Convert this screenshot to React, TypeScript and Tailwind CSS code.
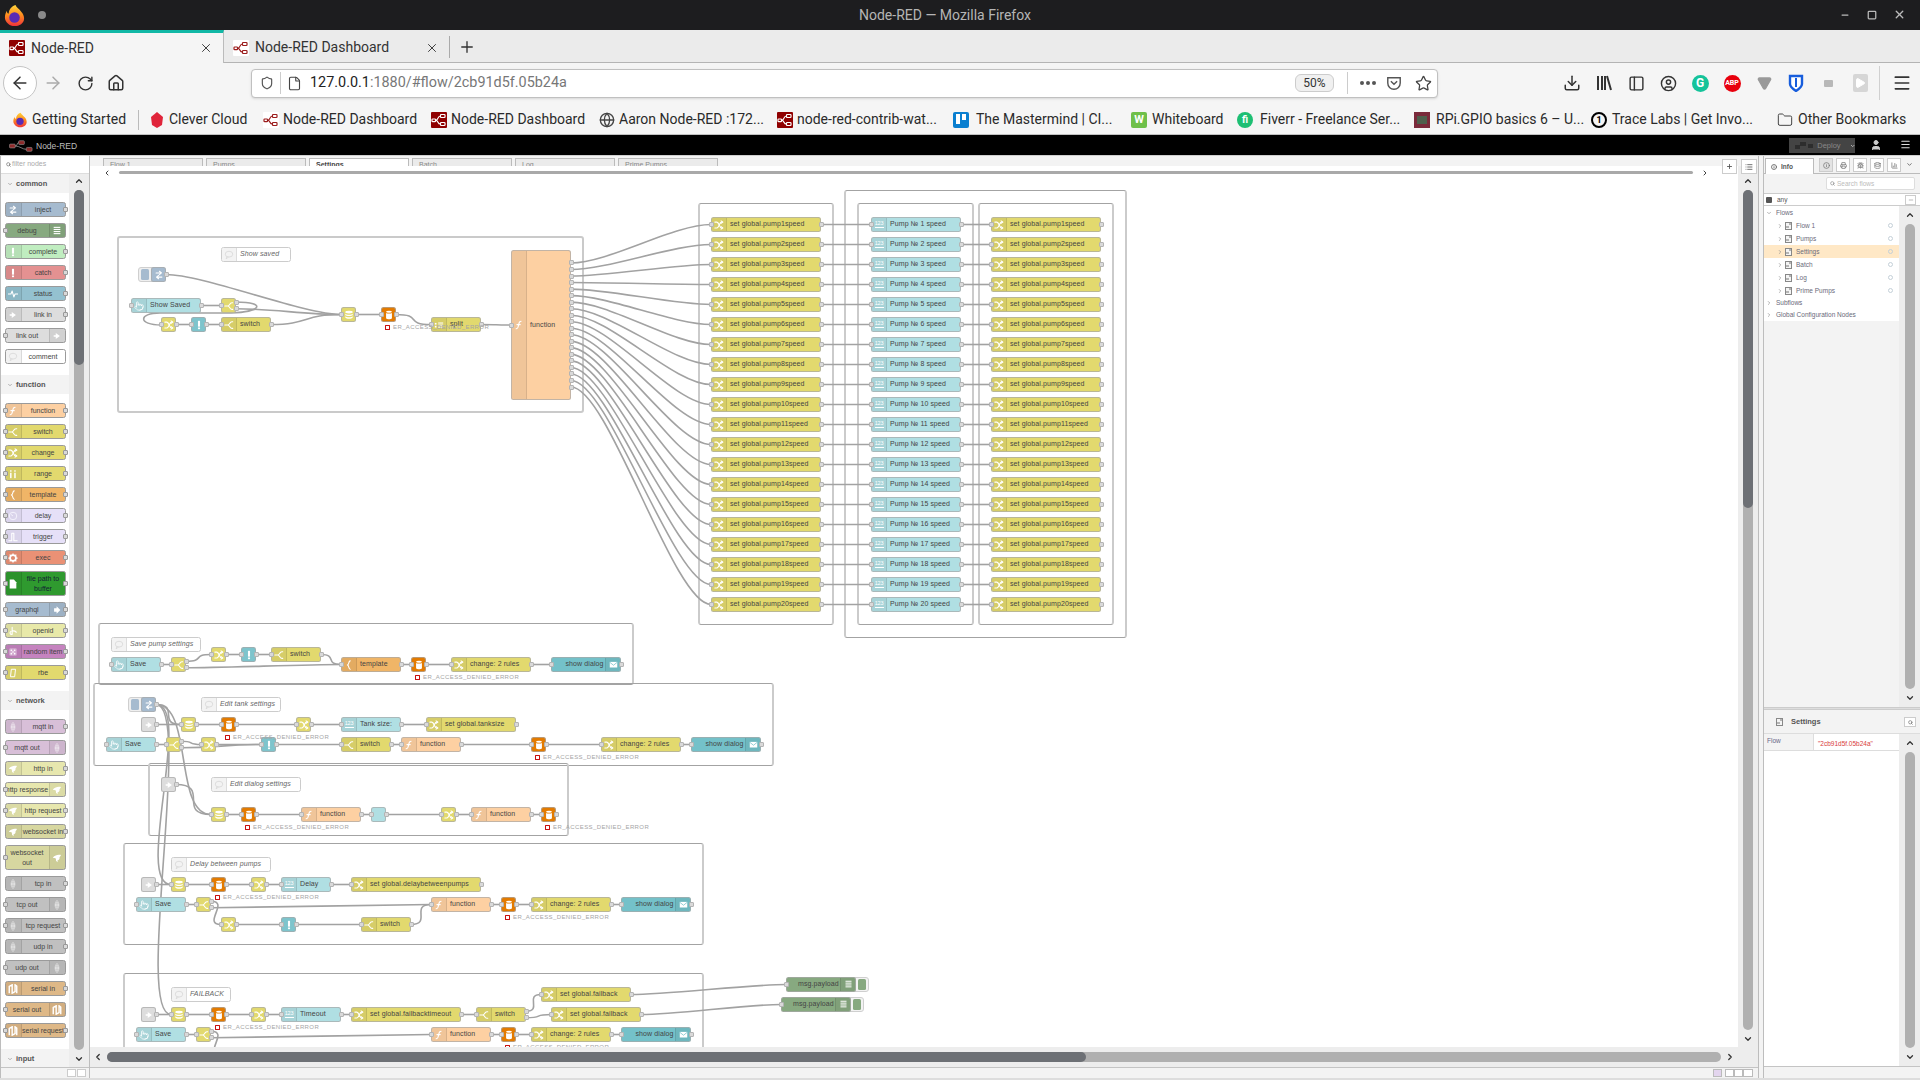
import React from "react";
import { ArrowLeft, ArrowRight, RotateCw, Home, Shield, File, Star, Download, PanelLeft, CircleUser, Menu, Folder, Globe, X, Plus, Minus, Square, ChevronUp, ChevronDown, ChevronLeft, ChevronRight, Pointer, Search, List, User, Info, Printer, Bug, Database, BarChart3, Play, Triangle } from "lucide-react";

type IconName = "change" | "switch" | "inject" | "fn" | "db" | "cyl" | "bang" | "touch" | "num" | "mail" | "moon" | "bubble" | "split" | "link" | "linkout" | "list" | "wave" | "tmpl" | "range" | "clock" | "trigger" | "gear" | "file" | "arrow" | "openid" | "dice" | "rbe" | "lens" | "bird" | "serial" | "none";

function Ico({ name, size = 10 }: { name: IconName; size?: number }) {
  const s = { width: size, height: size };
  const p = { fill: "none", stroke: "#fff", strokeWidth: 2.6, strokeLinecap: "round" as const, strokeLinejoin: "round" as const };
  const f = { fill: "#fff" };
  if (name === "num") {
    return (
      <span className="flex flex-col items-center leading-none text-white text-[5.5px] tracking-[-0.2px]">
        123
        <span className="w-[9px] h-px bg-white mt-px" />
      </span>
    );
  }
  if (name === "touch") return <Pointer style={s} color="#fff" strokeWidth={1.8} />;
  return (
    <svg viewBox="0 0 24 24" style={s}>
      {name === "change" && (
        <g {...p}>
          <path d="M2 5h5c5 0 6 14 11 14h3M2 19h5c5 0 6-14 11-14h3" />
          <path d="M17 2l4 3-4 3M17 16l4 3-4 3" />
        </g>
      )}
      {name === "switch" && (
        <g {...p}>
          <path d="M2 12h7c5 0 4-8 10-8h2M9 12c5 0 4 8 10 8h2" />
        </g>
      )}
      {name === "inject" && (
        <g {...p}>
          <path d="M5 7h12M13 3l5 4-5 4M19 17H7M11 13l-5 4 5 4" />
        </g>
      )}
      {name === "fn" && <path {...p} d="M17 3c-5 0-5 4-6 9s-1 9-6 9M7 11h8" />}
      {name === "db" && (
        <g {...f}>
          <ellipse cx="12" cy="5" rx="9" ry="3.5" />
          <path d="M3 9c3 3 15 3 18 0v3c-3 3-15 3-18 0zM3 15c3 3 15 3 18 0v3c-3 4-15 4-18 0z" />
        </g>
      )}
      {name === "cyl" && (
        <g {...f}>
          <ellipse cx="12" cy="4" rx="7" ry="2.5" />
          <path d="M5 7c2 2 12 2 14 0v13c-2 3-12 3-14 0z" />
        </g>
      )}
      {name === "bang" && (
        <g {...f}>
          <rect x="9.5" y="2" width="5" height="14" />
          <rect x="9.5" y="18" width="5" height="4" />
        </g>
      )}
      {name === "mail" && (
        <g>
          <rect x="2" y="5" width="20" height="15" fill="#fff" />
          <path d="M2 6l10 8 10-8" fill="none" stroke="#74c1c9" strokeWidth="2" />
        </g>
      )}
      {name === "moon" && <path {...f} d="M15 3a9 9 0 1 0 0 18 7.5 7.5 0 0 1 0-18z" />}
      {name === "bubble" && (
        <g fill="none" stroke="#d8d8d8" strokeWidth="2">
          <ellipse cx="12" cy="10" rx="9" ry="7" />
          <path d="M7 16l-2 5 6-4" />
        </g>
      )}
      {name === "split" && (
        <g {...f}>
          <rect x="2" y="7" width="4" height="4" />
          <rect x="2" y="14" width="4" height="4" />
          <rect x="10" y="6" width="12" height="2.5" />
          <rect x="10" y="11" width="12" height="2.5" />
          <rect x="10" y="16" width="12" height="2.5" />
        </g>
      )}
      {name === "link" && <path {...f} d="M4 10h5V5l10 7-10 7v-5H4z" />}
      {name === "linkout" && <path {...f} d="M4 10h5V5l10 7-10 7v-5H4z" />}
      {name === "list" && (
        <g {...f}>
          <rect x="4" y="2" width="16" height="2.6" />
          <rect x="4" y="7" width="16" height="2.6" />
          <rect x="4" y="12" width="16" height="2.6" />
          <rect x="4" y="17" width="16" height="2.6" />
        </g>
      )}
      {name === "wave" && <path {...p} d="M1 12h6l3-7 4 14 3-7h6" />}
      {name === "tmpl" && <path {...p} d="M15 2c-5 0-2 9-7 10 5 1 2 10 7 10" />}
      {name === "range" && (
        <g {...f}>
          <rect x="5" y="9" width="3.5" height="13" />
          <rect x="5" y="3" width="3.5" height="3.5" />
          <rect x="15" y="9" width="3.5" height="13" />
          <rect x="15" y="3" width="3.5" height="3.5" />
        </g>
      )}
      {name === "clock" && (
        <g fill="none" stroke="#f4f2fc" strokeWidth="2.4">
          <circle cx="12" cy="12" r="9" />
          <path d="M12 12l-5-4" />
        </g>
      )}
      {name === "trigger" && <path {...p} d="M2 21h7V3h5v18h8" />}
      {name === "gear" && (
        <g fill="none" stroke="#fff" strokeWidth="4">
          <circle cx="12" cy="12" r="7" />
          <path d="M12 1v4M12 19v4M1 12h4M19 12h4M4 4l3 3M17 17l3 3M20 4l-3 3M7 17l-3 3" strokeWidth="3" />
        </g>
      )}
      {name === "file" && <path {...f} d="M4 1h10l6 7v15H4z" />}
      {name === "arrow" && <path {...f} d="M5 8h6V3l9 9-9 9v-5H5z" />}
      {name === "openid" && (
        <g {...p}>
          <path d="M10 3v17M10 12c6-1 8 1 10 3M10 20c-5 1-7-4-3-7" />
        </g>
      )}
      {name === "dice" && (
        <g fill="#fff">
          <rect x="3" y="3" width="18" height="18" rx="3" fillOpacity=".35" />
          <circle cx="8" cy="8" r="2" />
          <circle cx="16" cy="8" r="2" />
          <circle cx="12" cy="12" r="2" />
          <circle cx="8" cy="16" r="2" />
          <circle cx="16" cy="16" r="2" />
        </g>
      )}
      {name === "rbe" && <path fill="none" stroke="#fff" strokeWidth="2.4" d="M8 3h10l-2 18H6z" />}
      {name === "lens" && (
        <g fill="none" stroke="#fff" strokeOpacity=".75" strokeWidth="1.6">
          <path d="M12 1c-6 6-6 16 0 22 6-6 6-16 0-22z" />
          <path d="M12 5c-3 4-3 10 0 14 3-4 3-10 0-14z" />
          <path d="M7 12h10" />
        </g>
      )}
      {name === "bird" && <path {...f} d="M2 11c6-7 14-8 20-6-2 2-2 4-4 5 1 3-1 7-5 8l1 4-4-3c-1-3 0-5-1-6-2 0-4 0-7-2z" />}
      {name === "serial" && <path fill="none" stroke="#fff" strokeWidth="3.4" d="M3 22V6l7-4v20l7-4V2l4 3v17" />}
    </svg>
  );
}

const C = {
  yel: "#e2d96e", ui: "#b0dfe3", fn: "#fdd0a2", inj: "#a6bbcf", toast: "#7ec4cc", dlg: "#74c1c9", tpl: "#f0b567",
  or: "#e37b00", link: "#dddddd", dbg: "#87a980", white: "#ffffff",
};

type N = {
  id: string; x: number; y: number; w: number; h: number; c: string; icon: IconName; label: string;
  side?: "r"; outs: number; inp: boolean; status?: boolean; btn?: "inject" | "debug"; comment?: boolean; tx?: number;
};

const nodes: N[] = [];
const byId: Record<string, N> = {};
function n(id: string, x: number, y: number, w: number, c: string, icon: IconName, label = "", o: Partial<N> = {}) {
  const node: N = { id, x, y, w, h: 15, c, icon, label, outs: 1, inp: true, ...o };
  nodes.push(node);
  byId[id] = node;
}
function cm(x: number, y: number, w: number, label: string) {
  n("c" + x + y, x, y, w, C.white, "bubble", label, { comment: true, outs: 0, inp: false });
}

const wires: [string, string, number?][] = [];
function chain(...ids: string[]) {
  for (let i = 0; i < ids.length - 1; i++) wires.push([ids[i], ids[i + 1]]);
}

// Show saved
cm(221, 246, 70, "Show saved");
n("a_i", 151, 266, 15, C.inj, "inject", "", { btn: "inject", inp: false });
n("a_b", 131, 297, 70, C.ui, "touch", "Show Saved");
n("a_s", 221, 297, 15, C.yel, "switch", "", { outs: 2 });
n("a_c", 161, 316, 15, C.yel, "change");
n("a_t", 191, 316, 15, C.toast, "bang");
n("a_w", 221, 316, 50, C.yel, "switch", "switch");
n("a_d", 341, 306, 15, C.yel, "db");
n("a_o", 381, 306, 15, C.or, "cyl", "", { status: true });
n("a_p", 431, 316, 50, C.yel, "split", "split");
n("a_f", 511, 249, 60, C.fn, "fn", "function", { h: 150, outs: 20 });
chain("a_b", "a_s");
chain("a_c", "a_t", "a_w", "a_d", "a_o", "a_p", "a_f");
chain("a_i", "a_d");
wires.push(["a_s", "a_d", 1]);

for (let i = 0; i < 20; i++) {
  const y = 216 + 20 * i;
  const k = i + 1;
  n("A" + k, 711, y, 110, C.yel, "change", `set global.pump${k}speed`);
  n("P" + k, 871, y, 90, C.ui, "num", `Pump № ${k} speed`);
  n("D" + k, 991, y, 110, C.yel, "change", `set global.pump${k}speed`);
  chain("A" + k, "P" + k, "D" + k);
  wires.push(["a_f", "A" + k, i]);
}

// Save pump settings
cm(111, 636, 90, "Save pump settings");
n("b_b", 111, 656, 50, C.ui, "touch", "Save");
n("b_s", 171, 656, 15, C.yel, "switch", "", { outs: 2 });
n("b_c", 211, 646, 15, C.yel, "change");
n("b_t", 241, 646, 15, C.toast, "bang");
n("b_w", 271, 646, 50, C.yel, "switch", "switch");
n("b_m", 341, 656, 60, C.tpl, "tmpl", "template");
n("b_o", 411, 656, 15, C.or, "cyl", "", { status: true });
n("b_h", 451, 656, 80, C.yel, "change", "change: 2 rules");
n("b_g", 551, 656, 70, C.dlg, "mail", "show dialog", { side: "r", tx: 13.5 });
chain("b_b", "b_s");
wires.push(["b_s", "b_c", 0], ["b_s", "b_m", 1]);
chain("b_c", "b_t", "b_w", "b_m", "b_o", "b_h", "b_g");

// Edit tank settings
n("c_i", 141, 696, 15, C.inj, "inject", "", { btn: "inject", inp: false });
cm(201, 696, 80, "Edit tank settings");
n("c_l", 141, 716, 15, C.link, "link", "", { inp: false });
n("c_d", 181, 716, 15, C.yel, "db");
n("c_o", 221, 716, 15, C.or, "cyl", "", { status: true });
n("c_c", 296, 716, 15, C.yel, "change");
n("c_n", 341, 716, 60, C.ui, "num", "Tank size:");
n("c_g", 426, 716, 90, C.yel, "change", "set global.tanksize");
n("c_b", 106, 736, 50, C.ui, "touch", "Save");
n("c_s", 166, 736, 15, C.yel, "switch", "", { outs: 2 });
n("c_h", 201, 736, 15, C.yel, "change");
n("c_t", 261, 736, 15, C.toast, "bang");
n("c_w", 341, 736, 50, C.yel, "switch", "switch");
n("c_f", 401, 736, 60, C.fn, "fn", "function");
n("c_r", 531, 736, 15, C.or, "cyl", "", { status: true });
n("c_j", 601, 736, 80, C.yel, "change", "change: 2 rules");
n("c_y", 691, 736, 70, C.dlg, "mail", "show dialog", { side: "r", tx: 13.5 });
chain("c_l", "c_d", "c_o", "c_c", "c_n", "c_g");
chain("c_b", "c_s");
wires.push(["c_s", "c_h", 0], ["c_s", "c_t", 1]);
chain("c_h", "c_t", "c_w", "c_f", "c_r", "c_j", "c_y");
chain("c_i", "c_d");

// Edit dialog settings
n("d_l", 161, 776, 15, C.link, "link", "", { inp: false });
cm(211, 776, 90, "Edit dialog settings");
n("d_d", 211, 806, 15, C.yel, "db");
n("d_o", 241, 806, 15, C.or, "cyl", "", { status: true });
n("d_f", 301, 806, 60, C.fn, "fn", "function");
n("d_m", 371, 806, 15, C.ui, "moon");
n("d_c", 441, 806, 15, C.yel, "change");
n("d_g", 471, 806, 60, C.fn, "fn", "function");
n("d_r", 541, 806, 15, C.or, "cyl", "", { status: true });
chain("d_l", "d_d", "d_o", "d_f", "d_m", "d_c", "d_g", "d_r");
chain("c_i", "d_d");

// Delay
cm(171, 856, 100, "Delay between pumps");
n("e_l", 141, 876, 15, C.link, "link", "", { inp: false });
n("e_d", 171, 876, 15, C.yel, "db");
n("e_o", 211, 876, 15, C.or, "cyl", "", { status: true });
n("e_c", 251, 876, 15, C.yel, "change");
n("e_n", 281, 876, 50, C.ui, "num", "Delay");
n("e_g", 351, 876, 130, C.yel, "change", "set global.delaybetweenpumps");
n("e_b", 136, 896, 50, C.ui, "touch", "Save");
n("e_s", 196, 896, 15, C.yel, "switch", "", { outs: 2 });
n("e_f", 431, 896, 60, C.fn, "fn", "function");
n("e_r", 501, 896, 15, C.or, "cyl", "", { status: true });
n("e_h", 531, 896, 80, C.yel, "change", "change: 2 rules");
n("e_y", 621, 896, 70, C.dlg, "mail", "show dialog", { side: "r", tx: 13.5 });
n("e_x", 221, 916, 15, C.yel, "change");
n("e_t", 281, 916, 15, C.toast, "bang");
n("e_w", 361, 916, 50, C.yel, "switch", "switch");
chain("e_l", "e_d", "e_o", "e_c", "e_n", "e_g");
chain("e_b", "e_s");
wires.push(["e_s", "e_x", 0], ["e_s", "e_f", 1]);
chain("e_x", "e_t", "e_w", "e_f", "e_r", "e_h", "e_y");
chain("c_i", "e_d");

// Failback
cm(171, 986, 60, "FAILBACK");
n("f_l", 141, 1006, 15, C.link, "link", "", { inp: false });
n("f_d", 171, 1006, 15, C.yel, "db");
n("f_o", 211, 1006, 15, C.or, "cyl", "", { status: true });
n("f_c", 251, 1006, 15, C.yel, "change");
n("f_n", 281, 1006, 60, C.ui, "num", "Timeout");
n("f_g", 351, 1006, 110, C.yel, "change", "set global.failbacktimeout");
n("f_w", 476, 1006, 50, C.yel, "switch", "switch", { outs: 2 });
n("f_1", 541, 986, 90, C.yel, "change", "set global.failback");
n("f_2", 551, 1006, 90, C.yel, "change", "set global.failback");
n("f_3", 786, 976, 70, C.dbg, "list", "msg.payload", { side: "r", tx: 11, outs: 0, btn: "debug" });
n("f_4", 781, 996, 70, C.dbg, "list", "msg.payload", { side: "r", tx: 11, outs: 0, btn: "debug" });
n("f_b", 136, 1026, 50, C.ui, "touch", "Save");
n("f_s", 196, 1026, 15, C.yel, "switch", "", { outs: 2 });
n("f_f", 431, 1026, 60, C.fn, "fn", "function");
n("f_r", 501, 1026, 15, C.or, "cyl", "", { status: true });
n("f_h", 531, 1026, 80, C.yel, "change", "change: 2 rules");
n("f_y", 621, 1026, 70, C.dlg, "mail", "show dialog", { side: "r", tx: 13.5 });
n("f_x", 221, 1046, 15, C.yel, "change");
n("f_t", 281, 1046, 15, C.toast, "bang");
n("f_z", 361, 1046, 50, C.yel, "switch", "switch");
chain("f_l", "f_d", "f_o", "f_c", "f_n", "f_g", "f_w");
wires.push(["f_w", "f_1", 0], ["f_w", "f_2", 1]);
chain("f_1", "f_3");
chain("f_2", "f_4");
chain("f_b", "f_s");
wires.push(["f_s", "f_x", 0], ["f_s", "f_f", 1]);
chain("f_f", "f_r", "f_h", "f_y");
chain("c_i", "f_d");

const OX = 90;
const OY = 165;
const CANVAS_Y = 166;

function outY(a: N, i: number) {
  return a.y + a.h / 2 + (i - (a.outs - 1) / 2) * 6.53;
}
function wirePath(x1: number, y1: number, x2: number, y2: number) {
  const dx = x2 - x1;
  const dy = y2 - y1;
  const delta = Math.hypot(dx, dy);
  const nw = 50;
  if (dx > 0) {
    let s = 0.75;
    if (delta < nw) s = 0.75 - 0.75 * ((nw - delta) / nw);
    const k = s * nw;
    return `M${x1} ${y1}C${x1 + k} ${y1} ${x2 - k} ${y2} ${x2} ${y2}`;
  }
  const k = 18;
  const my = (y1 + y2) / 2;
  return `M${x1} ${y1}C${x1 + k} ${y1} ${x1 + k} ${my} ${x1} ${my}L${x2} ${my}C${x2 - k} ${my} ${x2 - k} ${y2} ${x2} ${y2}`;
}

const groups = [
  [117, 236, 467, 177, "l"], [698, 203, 136, 422, "d"], [844, 190, 283, 448, "d"], [857, 203, 117, 422, "d"], [978, 203, 136, 422, "d"],
  [98, 623, 536, 62, "d"], [93, 683, 681, 83, "d"], [148, 763, 421, 73, "d"], [123, 843, 581, 102, "d"], [123, 973, 581, 200, "d"],
] as const;

function Group({ g }: { g: (typeof groups)[number] }) {
  return (
    <div
      className={g[4] === "l"
        ? "absolute rounded-[3px] border-2 border-[#cacaca]"
        : "absolute rounded-[3px] border-x-2 border-y border-x-[#cbcbcb] border-y-[#a3a3a3]"}
      style={{ left: g[0] - OX, top: g[1] - CANVAS_Y, width: g[2], height: g[3] }}
    />
  );
}

function Port({ left, top }: { left: number; top: number }) {
  return <div className="absolute w-[5px] h-[5px] rounded-[1px] bg-[#d9d9d9] border border-[#b4b4b4]" style={{ left, top }} />;
}

function FlowNode({ d }: { d: N }) {
  const small = d.w === 15;
  return (
    <>
      {d.btn === "inject" && (
        <div className="absolute w-[18px] h-[15px] rounded-[3px] border border-[#cfcfcf] bg-[#efefef] flex items-center pl-[2px]" style={{ left: d.x - OX - 13, top: d.y - OY }}>
          <div className="w-[8px] h-[11px] rounded-[1.5px] bg-[#a6bbcf]" />
        </div>
      )}
      {d.btn === "debug" && (
        <div className="absolute w-[18px] h-[15px] rounded-[3px] border border-[#cfcfcf] bg-[#f3f3f3] flex items-center justify-end pr-[2px]" style={{ left: d.x - OX + d.w - 5, top: d.y - OY }}>
          <div className="w-[8px] h-[11px] rounded-[1.5px] bg-[#87a980]" />
        </div>
      )}
      <div
        className={d.comment
          ? "absolute rounded-[2.5px] border border-[#cccccc] flex items-center italic text-[#666] text-[7px] tracking-[0.1px] whitespace-nowrap"
          : "absolute rounded-[2.5px] border border-[#a8a8a8]/70 flex items-center text-[#444] text-[7px] tracking-[0.1px] whitespace-nowrap"}
        style={{ left: d.x - OX, top: d.y - OY, width: d.w, height: d.h, backgroundColor: d.c, paddingLeft: small ? 0 : d.tx ?? 18 }}
      >
        {d.icon !== "none" && (
          d.side === "r" ? (
            <div className="absolute right-0 top-0 bottom-0 w-[15px] bg-black/5 border-l border-black/10 rounded-r-[2px] flex items-center justify-center">
              <Ico name={d.icon} size={9} />
            </div>
          ) : (
            <div
              className={small
                ? "absolute left-0 top-0 bottom-0 w-full flex items-center justify-center"
                : d.comment
                  ? "absolute left-0 top-0 bottom-0 w-[15px] bg-[#f3f3f3] border-r border-[#dddddd] rounded-l-[2px] flex items-center justify-center"
                  : "absolute left-0 top-0 bottom-0 w-[15px] bg-black/5 border-r border-black/10 rounded-l-[2px] flex items-center justify-center"}
            >
              <Ico name={d.icon} size={10} />
            </div>
          )
        )}
        {d.label}
      </div>
      {d.inp && <Port left={d.x - OX - 2.5} top={d.y - OY + d.h / 2 - 2.5} />}
      {Array.from({ length: d.outs }, (_, i) => (
        <Port key={i} left={d.x - OX + d.w - 2.5} top={outY(d, i) - OY - 2.5} />
      ))}
    </>
  );
}

function NodeStatus({ d }: { d: N }) {
  return (
    <div className="absolute flex items-center gap-[3px] text-[6px] tracking-[0.4px] leading-none text-[#a5a5a5] whitespace-nowrap" style={{ left: d.x - OX + 4, top: d.y - OY + 17 }}>
      <span className="w-[5px] h-[5px] rounded-[0.5px] border-[1.5px] border-[#c81010] bg-white" />
      ER_ACCESS_DENIED_ERROR
    </div>
  );
}

function Canvas() {
  return (
    <div className="relative flex-1 overflow-hidden bg-white">
      {groups.map((g, i) => <Group key={i} g={g} />)}
      <svg className="absolute left-0 top-0 w-full h-full" fill="none" stroke="#a2a2a2" strokeWidth="1.6">
        <g transform={`translate(${-OX} ${-OY})`}>
          {wires.map(([a, b, i], k) => {
            const A = byId[a];
            const B = byId[b];
            return <path key={k} d={wirePath(A.x + A.w, outY(A, i ?? 0), B.x, B.y + B.h / 2)} />;
          })}
          <path d="M236 301C268 301 262 312 225 312L160 312C138 312 138 324 161 324" />
        </g>
      </svg>
      {nodes.map((d) => <FlowNode key={d.id} d={d} />)}
      {nodes.filter((d) => d.status).map((d) => <NodeStatus key={d.id} d={d} />)}
      <div className="absolute left-[13px] top-0 right-[-2px] h-[13px] bg-white flex items-center gap-[8px]">
        <ChevronLeft size={8} color="#444" strokeWidth={3} />
        <div className="w-[1574px] h-[3px] rounded-full bg-[#a9a9a9]" />
        <ChevronRight size={8} color="#444" strokeWidth={3} />
      </div>
    </div>
  );
}

type PN = { l: string; c: string; i: IconName; r?: boolean; inp?: boolean; out?: boolean; h?: number; t?: string };
const pal: { title: string; items: PN[] }[] = [
  { title: "common", items: [
    { l: "inject", c: "#a6bbcf", i: "inject", out: true },
    { l: "debug", c: "#87a980", i: "list", r: true, inp: true },
    { l: "complete", c: "#c0edc0", i: "bang", out: true },
    { l: "catch", c: "#e49191", i: "bang", out: true },
    { l: "status", c: "#94c1d0", i: "wave", out: true },
    { l: "link in", c: "#dddddd", i: "link", out: true },
    { l: "link out", c: "#dddddd", i: "link", r: true, inp: true },
    { l: "comment", c: "#ffffff", i: "bubble" },
  ] },
  { title: "function", items: [
    { l: "function", c: "#fdd0a2", i: "fn", inp: true, out: true },
    { l: "switch", c: "#e2d96e", i: "switch", inp: true, out: true },
    { l: "change", c: "#e2d96e", i: "change", inp: true, out: true },
    { l: "range", c: "#e2d96e", i: "range", inp: true, out: true },
    { l: "template", c: "#f0b567", i: "tmpl", inp: true, out: true },
    { l: "delay", c: "#e6e0f8", i: "clock", inp: true, out: true },
    { l: "trigger", c: "#e6e0f8", i: "trigger", inp: true, out: true },
    { l: "exec", c: "#ea9175", i: "gear", inp: true, out: true },
    { l: "file path to buffer", c: "#2f9a2f", i: "file", inp: true, out: true, h: 25, t: "#123" },
    { l: "graphql", c: "#a6bbcf", i: "arrow", r: true, inp: true, out: true },
    { l: "openid", c: "#e8e9a9", i: "openid", inp: true, out: true },
    { l: "random item", c: "#c583bf", i: "dice", inp: true, out: true },
    { l: "rbe", c: "#e2d96e", i: "rbe", inp: true, out: true },
  ] },
  { title: "network", items: [
    { l: "mqtt in", c: "#d8bfd8", i: "lens", out: true },
    { l: "mqtt out", c: "#d8bfd8", i: "lens", r: true, inp: true },
    { l: "http in", c: "#e7e7ae", i: "bird", out: true },
    { l: "http response", c: "#e7e7ae", i: "bird", r: true, inp: true },
    { l: "http request", c: "#e7e7ae", i: "bird", inp: true, out: true },
    { l: "websocket in", c: "#d7d7a0", i: "bird", out: true },
    { l: "websocket out", c: "#d7d7a0", i: "bird", r: true, inp: true, h: 25 },
    { l: "tcp in", c: "#c0c0c0", i: "lens", out: true },
    { l: "tcp out", c: "#c0c0c0", i: "lens", r: true, inp: true },
    { l: "tcp request", c: "#c0c0c0", i: "lens", inp: true, out: true },
    { l: "udp in", c: "#c0c0c0", i: "lens", out: true },
    { l: "udp out", c: "#c0c0c0", i: "lens", r: true, inp: true },
    { l: "serial in", c: "#deb887", i: "serial", out: true },
    { l: "serial out", c: "#deb887", i: "serial", r: true, inp: true },
    { l: "serial request", c: "#deb887", i: "serial", inp: true, out: true },
  ] },
];

function PalNode({ p }: { p: PN }) {
  return (
    <div
      className="relative w-[61px] ml-[3.5px] rounded-[2.5px] border border-[#9a9a9a] flex items-center text-center text-[7px] leading-[10px]"
      style={{ backgroundColor: p.c, height: p.h ?? 15, color: p.t ?? "#444", paddingLeft: p.r ? 0 : 16, paddingRight: p.r ? 16 : 0 }}
    >
      <div className={p.r
        ? "absolute right-0 top-0 bottom-0 w-[16px] bg-black/5 border-l border-black/10 flex items-center justify-center"
        : "absolute left-0 top-0 bottom-0 w-[16px] bg-black/5 border-r border-black/10 flex items-center justify-center"}>
        <Ico name={p.i} size={10} />
      </div>
      <span className="w-full whitespace-normal">{p.l}</span>
      {p.inp && <div className="absolute left-[-3px] top-1/2 -mt-[2.5px] w-[5px] h-[5px] rounded-[1px] bg-[#d9d9d9] border border-[#999]" />}
      {p.out && <div className="absolute right-[-3px] top-1/2 -mt-[2.5px] w-[5px] h-[5px] rounded-[1px] bg-[#d9d9d9] border border-[#999]" />}
    </div>
  );
}

function CatHead({ t }: { t: string }) {
  return (
    <div className="h-[19px] bg-[#f3f3f3] flex items-center pl-[6px] gap-[3px] text-[7.5px] font-bold text-[#555]">
      <ChevronDown size={6} color="#888" strokeWidth={2.5} />
      {t}
    </div>
  );
}

function ScrollCol({ dark, top, bottom, w }: { dark?: number; top: number; bottom: number; w: string }) {
  return (
    <div className={w === "20" ? "relative w-[20px] bg-[#ededed] shrink-0" : "relative w-[21px] bg-[#ededed] shrink-0"}>
      <ChevronUp className="absolute left-1/2 -ml-[5px]" style={{ top: top - 14 }} size={10} color="#333" strokeWidth={3} />
      <div className="absolute left-1/2 -ml-[5px] w-[10px] rounded-full bg-[#b0b0b0]" style={{ top, bottom }} />
      {dark ? <div className="absolute left-1/2 -ml-[5px] w-[10px] rounded-full bg-[#6d7075]" style={{ top, height: dark }} /> : null}
      <ChevronDown className="absolute left-1/2 -ml-[5px]" style={{ bottom: bottom - 14 }} size={10} color="#333" strokeWidth={3} />
    </div>
  );
}

function Palette() {
  return (
    <div className="w-[90px] shrink-0 flex flex-col border-l border-r border-[#bdbdbd] bg-white">
      <div className="h-[18px] shrink-0 flex items-center pl-[5px] gap-[1px] text-[7px] text-[#aaa] border-b border-[#ddd]">
        <Search size={5} color="#666" strokeWidth={3} />
        filter nodes
      </div>
      <div className="flex-1 flex min-h-0">
        <div className="flex-1 overflow-hidden">
          {pal.map((c) => (
            <div key={c.title}>
              <CatHead t={c.title} />
              <div className="flex flex-col gap-[6px] pt-[9px] pb-[11px]">
                {c.items.map((p) => <PalNode key={p.l} p={p} />)}
              </div>
            </div>
          ))}
          <CatHead t="input" />
        </div>
        <ScrollCol w="20" top={16} bottom={17} dark={175} />
      </div>
      <div className="h-[11px] shrink-0 bg-[#f3f3f3] border-t border-[#c4c4c4] flex items-center justify-end gap-[1px] pr-[3px]">
        <span className="w-[9px] h-[8px] bg-white border border-[#ccc]" />
        <span className="w-[9px] h-[8px] bg-white border border-[#ccc]" />
      </div>
    </div>
  );
}

const wsTabs = ["Flow 1", "Pumps", "Settings", "Batch", "Log", "Prime Pumps"];

function Workspace() {
  return (
    <div className="flex-1 min-w-0 flex flex-col">
      <div className="relative h-[10px] shrink-0 bg-[#f3f3f3] flex gap-[3px] pl-[13px] pt-[2px] overflow-hidden">
        {wsTabs.map((t) => (
          <div key={t} className={t === "Settings"
            ? "w-[100px] h-[20px] bg-white border border-[#bbb] pl-[6px] text-[7px] leading-[12px] font-bold text-[#444]"
            : "w-[100px] h-[20px] bg-[#ebebeb] border border-[#bbb] pl-[6px] text-[7px] leading-[12px] text-[#888]"}>{t}</div>
        ))}
      </div>
      <div className="flex-1 flex min-h-0">
        <Canvas />
        <ScrollCol w="20" top={24} bottom={17} dark={318} />
      </div>
      <div className="relative h-[20px] shrink-0 bg-[#ededed] flex items-center">
        <ChevronLeft className="absolute left-[3px]" size={10} color="#333" strokeWidth={3} />
        <div className="absolute left-[17px] w-[1614px] h-[10px] rounded-full bg-[#b0b0b0]" />
        <div className="absolute left-[17px] w-[979px] h-[10px] rounded-full bg-[#6d7075]" />
        <ChevronRight className="absolute left-[1635px]" size={10} color="#333" strokeWidth={3} />
      </div>
      <div className="h-[11px] shrink-0 bg-[#f3f3f3] border-t border-[#c4c4c4] flex items-center justify-end gap-[3px] pr-[5px]">
        <span className="w-[9px] h-[8px] bg-[#e3d5ee] border border-[#bbb]" />
        <span className="flex">
          <span className="w-[9px] h-[8px] bg-white border border-[#bbb]" />
          <span className="w-[9px] h-[8px] bg-white border border-[#bbb]" />
          <span className="w-[10px] h-[8px] bg-white border border-[#bbb]" />
        </span>
      </div>
    </div>
  );
}

function TreeIcon() {
  return (
    <svg viewBox="0 0 7 8" className="w-[7px] h-[8px]">
      <rect x=".5" y=".5" width="6" height="7" fill="#f4f4f4" stroke="#888" />
      <path d="M4 2h2M1 5h3" stroke="#777" />
    </svg>
  );
}

function Sidebar() {
  const flows = ["Flow 1", "Pumps", "Settings", "Batch", "Log", "Prime Pumps"];
  const tabIcons = [Info, Printer, Bug, Database, BarChart3];
  return (
    <div className="w-[157px] shrink-0 flex flex-col border-l border-[#bdbdbd] bg-[#f3f3f3] text-[6.5px] text-[#555]">
      <div className="h-[18px] shrink-0 flex items-start pl-[1px] pt-[2px] border-b border-[#bbb] bg-[#f3f3f3]">
        <div className="w-[49px] h-[16px] bg-white border border-[#bbb] border-b-0 flex items-center pl-[5px] gap-[4px] font-bold text-[#555]">
          <Info size={6} color="#555" strokeWidth={3} />
          Info
        </div>
        <div className="flex gap-[3px] ml-[5px]">
          {tabIcons.map((I, i) => (
            <div key={i} className={i === 0 ? "w-[14px] h-[14px] bg-[#e3e3e3] border border-[#ccc] flex items-center justify-center" : "w-[14px] h-[14px] bg-white border border-[#ccc] flex items-center justify-center"}>
              <I size={7} color="#777" strokeWidth={2.5} />
            </div>
          ))}
        </div>
        <ChevronDown className="ml-[5px] mt-[3px]" size={7} color="#666" strokeWidth={3} />
      </div>
      <div className="h-[19px] shrink-0 flex items-center justify-end pr-[5px] border-b-0">
        <div className="w-[89px] h-[13px] bg-white border border-[#ddd] rounded-[2px] flex items-center pl-[3px] gap-[2px] text-[#bbb] text-[6.5px]">
          <Search size={5} color="#888" strokeWidth={3} />
          Search flows
        </div>
      </div>
      <div className="h-[13px] shrink-0 bg-white border-y border-[#ccc] flex items-center pl-[2px] gap-[5px] relative">
        <span className="w-[6px] h-[6px] bg-[#555] rounded-[1px]" />
        any
        <span className="absolute right-[4px] top-px w-[11px] h-[10px] border border-[#ccc] flex items-center justify-center">
          <Minus size={6} color="#777" />
        </span>
      </div>
      <div className="h-[501px] shrink-0 flex">
        <div className="flex-1 min-w-0">
          <div className="bg-white text-[#6a6a7a]">
            <div className="h-[13px] flex items-center pl-[2px] gap-[4px]">
              <ChevronDown size={6} color="#888" strokeWidth={2.5} />
              <span>Flows</span>
            </div>
            {flows.map((f) => (
              <div key={f} className={f === "Settings" ? "h-[13px] flex items-center pl-[13px] bg-[#ffe8c6]" : "h-[13px] flex items-center pl-[13px]"}>
                <ChevronRight size={6} color="#888" strokeWidth={2.5} />
                <span className="ml-[2px]"><TreeIcon /></span>
                <span className="ml-[4px] flex-1">{f}</span>
                <span className="w-[5px] h-[5px] rounded-full border border-[#c4d0d8] mr-[6px]" />
              </div>
            ))}
            <div className="h-[12px] flex items-center pl-[2px]"><ChevronRight size={6} color="#888" strokeWidth={2.5} /><span className="ml-[4px]">Subflows</span></div>
            <div className="h-[12px] flex items-center pl-[2px]"><ChevronRight size={6} color="#888" strokeWidth={2.5} /><span className="ml-[4px]">Global Configuration Nodes</span></div>
          </div>
        </div>
        <ScrollCol w="21" top={18} bottom={18} />
      </div>
      <div className="h-[3px] shrink-0 bg-[#ddd] border-y border-[#ccc]" />
      <div className="h-[24px] shrink-0 flex items-center pl-[12px] border-b border-[#ddd] relative">
        <TreeIcon />
        <span className="ml-[8px] text-[7.5px] font-bold">Settings</span>
        <span className="absolute right-[4px] top-[7px] w-[12px] h-[10px] bg-white border border-[#ccc] flex items-center justify-center">
          <Search size={5} color="#666" strokeWidth={3} />
        </span>
      </div>
      <div className="flex-1 flex min-h-0">
        <div className="flex-1 min-w-0 bg-white">
          <div className="h-[17px] flex border-b border-[#ddd]">
            <div className="w-[50px] bg-[#f3f3f3] border-r border-[#ddd] pl-[3px] leading-[13px] text-[#668]">Flow</div>
            <div className="flex-1 pl-[4px] pt-[4px] leading-[12px] text-[#d83b3b]">"2cb91d5f.05b24a"</div>
          </div>
        </div>
        <ScrollCol w="21" top={18} bottom={18} />
      </div>
      <div className="h-[12px] shrink-0 border-t border-[#c4c4c4]" />
    </div>
  );
}

function NRFav({ light }: { light?: boolean }) {
  const fg = light ? "#9b1c1c" : "#fff";
  return (
    <svg viewBox="0 0 16 16" className="w-[16px] h-[16px] shrink-0">
      <rect width="16" height="16" rx="1" fill={light ? "#fff" : "#8f0000"} />
      <g fill="none" stroke={fg} strokeWidth="1.2">
        <rect x="9.5" y="2.5" width="4.5" height="3" rx=".7" />
        <rect x="1" y="7" width="3.5" height="2.6" rx=".7" />
        <rect x="9.5" y="10.5" width="4.5" height="3" rx=".7" />
        <path d="M4.5 8.3C8 8.3 6 4 9.5 4M4.5 8.3C8 8.3 6 12 9.5 12" />
      </g>
    </svg>
  );
}

function FirefoxLogo({ size }: { size: number }) {
  return (
    <svg viewBox="0 0 24 24" style={{ width: size, height: size }} className="shrink-0">
      <defs>
        <linearGradient id="ffg" x1="0" y1="0" x2="0" y2="1">
          <stop offset="0" stopColor="#ffd43b" />
          <stop offset=".5" stopColor="#ff8a1e" />
          <stop offset="1" stopColor="#f0323c" />
        </linearGradient>
      </defs>
      <path d="M13 1c1 3 4 4 6 7 2 2 3 5 3 7 0 5-5 8-10 8S2 19 2 14c0-3 1-5 2-7 0 2 1 3 2 3 0-4 3-8 7-9z" fill="url(#ffg)" />
      <circle cx="12" cy="14" r="5.5" fill="#5a2bb5" />
    </svg>
  );
}

const marks: { x: number; g: number; t: string; w: React.ReactNode }[] = [
  { x: 149, g: 4, t: "Clever Cloud", w: <svg viewBox="0 0 16 16" className="w-[16px] h-[16px]"><path d="M8 0l6 5-1 8-5 3-5-3-1-8z" fill="#e0243a" /></svg> },
  { x: 263, g: 4, t: "Node-RED Dashboard", w: <NRFav light /> },
  { x: 431, g: 4, t: "Node-RED Dashboard", w: <NRFav /> },
  { x: 599, g: 4, t: "Aaron Node-RED :172...", w: <Globe size={16} color="#444" /> },
  { x: 777, g: 4, t: "node-red-contrib-wat...", w: <NRFav /> },
  { x: 953, g: 7, t: "The Mastermind | CI...", w: <span className="w-[16px] h-[16px] bg-[#0a7fd0] rounded-[2px] flex gap-[2px] items-start justify-center pt-[2px]"><span className="w-[4px] h-[10px] bg-white" /><span className="w-[4px] h-[6px] bg-white" /></span> },
  { x: 1131, g: 5, t: "Whiteboard", w: <span className="w-[16px] h-[16px] bg-[#6fc04a] rounded-[2px] text-white text-[11px] leading-[16px] text-center font-bold">W</span> },
  { x: 1237, g: 7, t: "Fiverr - Freelance Ser...", w: <span className="w-[16px] h-[16px] bg-[#1dbf73] rounded-full text-white text-[10px] leading-[15px] text-center font-bold">fi</span> },
  { x: 1414, g: 6, t: "RPi.GPIO basics 6 – U...", w: <span className="w-[16px] h-[16px] bg-[#7a2a3a] flex items-center justify-center"><span className="w-[10px] h-[8px] bg-[#4e5f4c]" /></span> },
  { x: 1591, g: 5, t: "Trace Labs | Get Invo...", w: <span className="w-[16px] h-[16px] rounded-full border-2 border-black text-[9px] leading-[12px] text-center font-bold text-black">1</span> },
  { x: 1777, g: 5, t: "Other Bookmarks", w: <Folder size={16} color="#444" strokeWidth={1.5} /> },
];

function Bookmarks() {
  return (
    <div className="relative h-[30px] shrink-0 bg-[#f5f5f5] border-b border-[#c0c0c0] text-[14px] text-[#2a2a2a] flex items-center">
      <div className="absolute left-[12px] flex items-center gap-[4px]"><FirefoxLogo size={16} />Getting Started</div>
      <div className="absolute left-[138px] w-px h-[20px] bg-[#bbb]" />
      {marks.map((m) => (
        <div key={m.x} className="absolute flex items-center whitespace-nowrap" style={{ left: m.x, gap: m.g }}>
          {m.w}
          {m.t}
        </div>
      ))}
    </div>
  );
}

export default function App() {
  const tools = [
    <Download size={18} color="#333" />,
    <svg viewBox="0 0 18 18" className="w-[18px] h-[18px]"><path d="M3 2v14M7 2v14M10 2v14M12 2l4 14" stroke="#333" strokeWidth="2" fill="none" /></svg>,
    <PanelLeft size={17} color="#333" />,
    <CircleUser size={17} color="#333" />,
    <span className="w-[17px] h-[17px] rounded-full bg-[#15c39a] text-white text-[12px] leading-[17px] text-center font-bold">G</span>,
    <span className="w-[17px] h-[17px] rounded-full bg-[#e8000d] text-white text-[7px] leading-[17px] text-center font-bold">ABP</span>,
    <Triangle size={15} color="#999" fill="#999" className="rotate-180" />,
    <svg viewBox="0 0 18 18" className="w-[18px] h-[18px]"><path d="M3 2h12v8c0 3-3 5-6 7-3-2-6-4-6-7z" fill="#fff" stroke="#175ddc" strokeWidth="2.4" /><path d="M9 4v9" stroke="#175ddc" strokeWidth="2" /></svg>,
    <span className="w-[9px] h-[7px] rounded-[1px] bg-[#b8b8b8]" />,
    <span className="w-[15px] h-[18px] rounded-[2px] bg-[#d6d6d6] flex items-center justify-center"><Play size={12} color="#fff" fill="#fff" /></span>,
  ];
  return (
    <div className="w-[1920px] h-[1080px] flex flex-col overflow-hidden bg-[#eeeeee] font-['Liberation_Sans',sans-serif]">
      {/* title bar */}
      <div className="relative h-[30px] shrink-0 bg-[#1d1d1f] flex items-center justify-center text-[14px] text-[#b5b5b5] font-['Roboto',sans-serif]">
        <div className="absolute left-[3px] top-[4px]"><FirefoxLogo size={23} /></div>
        <div className="absolute left-[38px] top-[11px] w-[8px] h-[8px] rounded-full bg-[#8a8a8a]" />
        <span className="mr-[30px]">Node-RED — Mozilla Firefox</span>
        <Minus className="absolute left-[1840px] top-[10px]" size={10} color="#bbb" strokeWidth={3} />
        <Square className="absolute left-[1867px] top-[10px]" size={10} color="#bbb" strokeWidth={3} />
        <X className="absolute left-[1893px] top-[8px]" size={13} color="#bbb" strokeWidth={2.5} />
      </div>
      {/* tabs */}
      <div className="h-[33px] shrink-0 bg-[#ebebeb] border-b border-[#b4b4b4] flex font-['Roboto',sans-serif] text-[14px] text-[#333]">
        <div className="w-[224px] h-[33px] bg-[#f5f5f5] border-t-[3px] border-[#12b8a6] border-r border-r-[#bbb] flex items-center pl-[9px] gap-[6px]">
          <NRFav />
          <span className="flex-1">Node-RED</span>
          <X className="mr-[10px]" size={14} color="#333" strokeWidth={1.6} />
        </div>
        <div className="w-[225px] flex items-center pl-[9px] pt-[3px] gap-[6px]">
          <NRFav light />
          <span className="flex-1">Node-RED Dashboard</span>
          <X className="mr-[10px]" size={14} color="#333" strokeWidth={1.6} />
        </div>
        <div className="w-px h-[22px] mt-[6px] bg-[#aaa]" />
        <Plus className="ml-[8px] mt-[8px]" size={18} color="#333" strokeWidth={1.8} />
      </div>
      {/* nav */}
      <div className="h-[42px] shrink-0 bg-[#f5f5f5] flex items-center pb-[2px] font-['Roboto',sans-serif]">
        <div className="ml-[3px] w-[34px] h-[34px] rounded-full border border-[#c4c4c4] bg-white flex items-center justify-center shrink-0"><ArrowLeft size={20} color="#333" strokeWidth={1.8} /></div>
        <div className="w-[32px] flex justify-center shrink-0"><ArrowRight size={20} color="#aaa" strokeWidth={1.8} /></div>
        <div className="w-[32px] flex justify-center shrink-0"><RotateCw size={17} color="#333" strokeWidth={2} /></div>
        <div className="w-[30px] flex justify-center shrink-0"><Home size={18} color="#333" strokeWidth={2} /></div>
        <div className="ml-[120px] w-[1187px] h-[29px] shrink-0 bg-white border border-[#c0c0c0] rounded-[4px] flex items-center shadow-sm">
          <Shield className="ml-[8px]" size={14} color="#555" strokeWidth={2} />
          <div className="ml-[6px] w-px h-[22px] bg-[#ccc]" />
          <File className="ml-[6px]" size={15} color="#444" strokeWidth={1.8} />
          <div className="ml-[8px] flex-1 text-[14.4px]">
            <span className="text-[#222]">127.0.0.1</span>
            <span className="text-[#777]">:1880/#flow/2cb91d5f.05b24a</span>
          </div>
          <div className="w-[39px] h-[18px] rounded-[6px] bg-[#f0f0f0] border border-[#ccc] text-[12px] text-[#333] flex items-center justify-center">50%</div>
          <div className="ml-[13px] w-px h-[22px] bg-[#ccc]" />
          <div className="ml-[12px] flex gap-[2px]">
            <span className="w-[4px] h-[4px] rounded-full bg-[#555]" />
            <span className="w-[4px] h-[4px] rounded-full bg-[#555]" />
            <span className="w-[4px] h-[4px] rounded-full bg-[#555]" />
          </div>
          <svg viewBox="0 0 18 18" className="ml-[10px] w-[16px] h-[16px]"><path d="M2 3h14v6c0 4-3 7-7 7s-7-3-7-7z" fill="none" stroke="#555" strokeWidth="1.6" /><path d="M5.5 7l3.5 3.5L12.5 7" fill="none" stroke="#555" strokeWidth="1.6" /></svg>
          <Star className="ml-[13px] mr-[5px]" size={17} color="#444" strokeWidth={1.8} />
        </div>
        <div className="ml-[118px] flex">
          {tools.map((t, i) => <div key={i} className="w-[32px] h-[24px] flex items-center justify-center">{t}</div>)}
        </div>
        <div className="ml-[3px] w-px h-[34px] bg-[#d0d0d0]" />
        <Menu className="ml-[12px]" size={20} color="#333" strokeWidth={2} />
      </div>
      <div className="font-['Roboto',sans-serif]"><Bookmarks /></div>
      {/* NR header */}
      <div className="relative h-[20px] shrink-0 bg-black flex items-center pt-[2px] text-[#bdbdbd]">
        <svg viewBox="0 0 26 12" className="ml-[9px] w-[25px] h-[12px]">
          <g fill="#8e2a2a" stroke="#999" strokeWidth=".6">
            <rect x="0.5" y="4" width="6" height="4" rx="1" />
            <rect x="10" y="0.5" width="6" height="4" rx="1" />
            <rect x="18" y="7.5" width="6" height="4" rx="1" />
          </g>
          <path d="M6.5 6C9 6 8 2.5 10 2.5M6.5 6C11 6 14 9.5 18 9.5" fill="none" stroke="#999" strokeWidth=".8" />
        </svg>
        <span className="ml-[2px] text-[8.5px]">Node-RED</span>
        <div className="absolute left-[1789px] top-[3px] w-[66px] h-[15px] bg-[#444] flex items-center text-[7.5px] text-[#888]">
          <span className="ml-[6px] w-[6px] h-[4px] bg-[#2d2d2d] mt-[2px]" />
          <span className="w-[6px] h-[4px] bg-[#2d2d2d] -mt-[4px]" />
          <span className="ml-[2px] w-[6px] h-[4px] bg-[#2d2d2d]" />
          <span className="ml-[4px]">Deploy</span>
          <ChevronDown className="ml-[9px]" size={6} color="#bbb" strokeWidth={4} />
        </div>
        <User className="absolute left-[1870px] top-[4px]" size={12} color="#ccc" fill="#ccc" />
        <Menu className="absolute left-[1900px] top-[4px]" size={11} color="#ddd" strokeWidth={2.5} />
      </div>
      {/* editor */}
      <div className="flex-1 min-h-0 flex border-t border-[#cfcfcf] text-[#444] relative">
        <Palette />
        <Workspace />
        <div className="w-[5px] shrink-0 bg-[#f3f3f3] border-l border-[#bdbdbd]" />
        <Sidebar />
        <div className="absolute left-[1722px] top-[3px] flex gap-[4px]">
          <div className="w-[15px] h-[15px] bg-white border border-[#ccc] flex items-center justify-center"><Plus size={7} color="#555" strokeWidth={3} /></div>
          <div className="w-[16px] h-[15px] bg-white border border-[#ccc] flex items-center justify-center"><List size={8} color="#555" strokeWidth={2.5} /></div>
        </div>
      </div>
      <div className="h-[2px] shrink-0 bg-[#dddddd]" />
    </div>
  );
}
